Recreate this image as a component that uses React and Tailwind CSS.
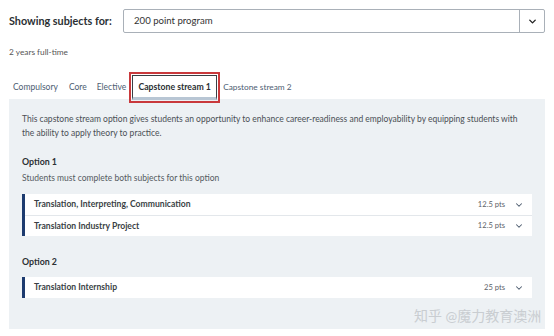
import { ChevronDown } from 'lucide-react'

const OPCION_1 = [
  { nombre: 'Translation, Interpreting, Communication', pts: '12.5 pts' },
  { nombre: 'Translation Industry Project', pts: '12.5 pts' },
]

const OPCION_2 = [{ nombre: 'Translation Internship', pts: '25 pts' }]

function Materias({ items }) {
  return (
    <div className="border-l-[3px] border-[#1d3b6f] bg-white">
      {items.map((m, i) => (
        <div
          key={m.nombre}
          className={`flex items-center h-[21px] pl-[9px] pr-[8px] ${i > 0 ? 'border-t border-[#e3e7eb]' : ''}`}
        >
          <span className="flex-1 font-bold text-[8.6px] text-[#3a3f45]">{m.nombre}</span>
          <span className="text-[7.6px] text-[#5b6168] mr-[9px]">{m.pts}</span>
          <ChevronDown size={10} strokeWidth={2.5} className="text-[#4b5a6d]" />
        </div>
      ))}
    </div>
  )
}

export default function App() {
  return (
    <div className="w-[554px] h-[336px] bg-white text-[#333] relative overflow-hidden" style={{ fontFamily: 'Lato, "Noto Sans CJK SC", sans-serif' }}>
      <div className="px-[9px] pt-[9px]">
        <div className="flex items-center">
          <span className="font-bold text-[10.8px] text-[#2b2f33] w-[114px] whitespace-nowrap">Showing subjects for:</span>
          <div className="flex-1 flex h-[24px] border border-[#a9b0b8] rounded-[2px]">
            <span className="flex-1 pl-[10px] flex items-center text-[9.6px] text-[#333]">200 point program</span>
            <div className="w-[25px] border-l border-[#a9b0b8] flex items-center justify-center">
              <ChevronDown size={11} strokeWidth={3} className="text-[#222]" />
            </div>
          </div>
        </div>
        <p className="text-[8.3px] leading-[12px] text-[#555] mt-[13px]">2 years full-time</p>

        <div className="flex items-center mt-[14px] h-[31px] -mb-[4px] relative z-10">
          <a className="text-[8.5px] text-[#4d5d72] ml-[4px]">Compulsory</a>
          <a className="text-[8.5px] text-[#4d5d72] ml-[11px]">Core</a>
          <a className="text-[8.5px] text-[#4d5d72] ml-[10px]">Elective</a>
          <div className="border-2 border-[#c9393c] p-[1px] ml-[3px]">
            <div className="bg-white border border-[#3a3f45] border-b-[3px] border-b-[#b8c6d4] h-[25px] w-[85px] flex items-center justify-center">
              <span className="font-bold text-[8.7px] text-[#2b2f33] whitespace-nowrap">Capstone stream 1</span>
            </div>
          </div>
          <a className="text-[8.3px] text-[#4d5d72] ml-[3px]">Capstone stream 2</a>
        </div>

        <div className="bg-[#edf1f4] h-[230px] px-[13px] pt-[13px]">
          <p className="text-[8.5px] leading-[14px] text-[#4a4f55]">
            This capstone stream option gives students an opportunity to enhance career-readiness and employability by equipping students with the ability to apply theory to practice.
          </p>

          <p className="font-bold text-[8.8px] leading-[14px] text-[#2b2f33] mt-[15px]">Option 1</p>
          <p className="text-[8.5px] leading-[14px] text-[#555b61] mt-[2px]">Students must complete both subjects for this option</p>
          <div className="mt-[9px]">
            <Materias items={OPCION_1} />
          </div>

          <p className="font-bold text-[8.8px] leading-[14px] text-[#2b2f33] mt-[19px]">Option 2</p>
          <div className="mt-[8px]">
            <Materias items={OPCION_2} />
          </div>
        </div>
      </div>

      <div className="absolute left-[414px] top-[307px] text-[14px] leading-[18px] text-[#c9cdd1] whitespace-nowrap">知乎 @魔力教育澳洲</div>
    </div>
  )
}
